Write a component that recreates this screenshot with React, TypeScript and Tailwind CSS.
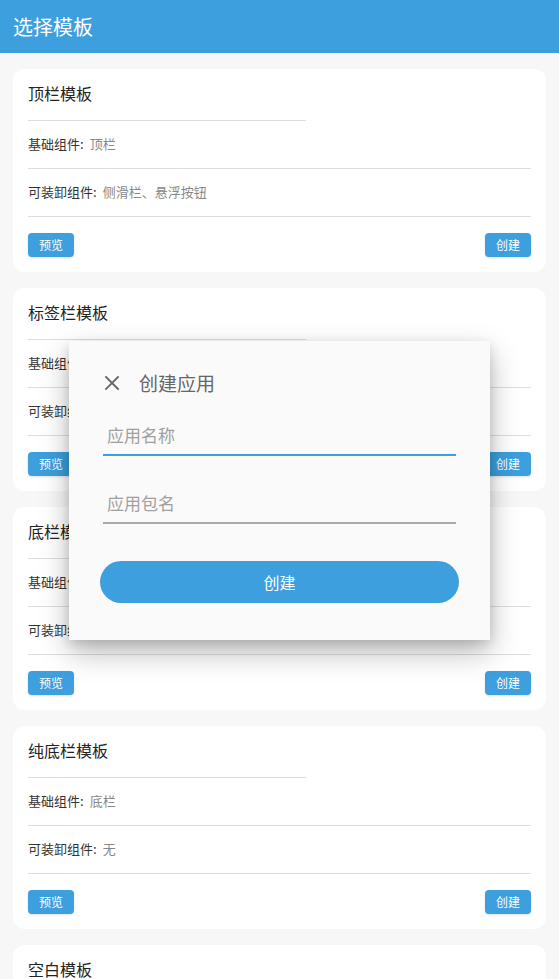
import React from "react";

const FONT = { fontFamily: '"Noto Sans CJK SC", "Noto Sans", sans-serif' };

interface ITemplate {
  title: string;
  base: string;
  optional: string;
}

const templates: ITemplate[] = [
  { title: "顶栏模板", base: "顶栏", optional: "侧滑栏、悬浮按钮" },
  { title: "标签栏模板", base: "顶栏、标签栏", optional: "侧滑栏、悬浮按钮" },
  { title: "底栏模板", base: "顶栏、底栏", optional: "侧滑栏、悬浮按钮" },
  { title: "纯底栏模板", base: "底栏", optional: "无" },
  { title: "空白模板", base: "无", optional: "顶栏、侧滑栏、悬浮按钮" },
];

const TemplateCard = ({ item }: { item: ITemplate }) => (
  <div className="flex h-[203px] shrink-0 flex-col rounded-xl bg-white px-[15px] pt-3 pb-[15px]">
    <div className="h-6 text-base leading-6 text-[#222]">{item.title}</div>
    <div className="mt-[15px] h-px w-[278px] bg-[#dedede]" />
    <div className="flex h-12 items-center border-b border-[#dedede] text-[13px]">
      <span className="-mt-[2px] text-[#333]">基础组件:</span>
      <span className="-mt-[2px] ml-1.5 text-[#888]">{item.base}</span>
    </div>
    <div className="flex h-12 items-center border-b border-[#dedede] text-[13px]">
      <span className="-mt-[2px] text-[#333]">可装卸组件:</span>
      <span className="-mt-[2px] ml-1.5 text-[#888]">{item.optional}</span>
    </div>
    <div className="mt-4 flex items-center justify-between">
      <button className="h-6 w-[46px] rounded-sm bg-[#3d9fdd] text-xs text-white shadow-sm">
        预览
      </button>
      <button className="h-6 w-[46px] rounded-sm bg-[#3d9fdd] text-xs text-white shadow-sm">
        创建
      </button>
    </div>
  </div>
);

const CreateDialog = () => (
  <div className="absolute top-[341px] left-[69px] flex h-[299px] w-[421px] flex-col bg-[#fafafa] px-[34px] shadow-[0_12px_28px_rgba(0,0,0,0.28),0_4px_10px_rgba(0,0,0,0.12)]">
    <div className="mt-[33px] flex h-[18px] items-center">
      <svg
        width="16"
        height="16"
        viewBox="0 0 16 16"
        className="ml-[1px]"
        stroke="#666"
        strokeWidth="1.8"
        strokeLinecap="square"
      >
        <path d="M2 2 L14 14 M14 2 L2 14" />
      </svg>
      <span className="ml-[19px] -mt-[1px] text-[19px] leading-none text-[#666]">
        创建应用
      </span>
    </div>

    {/* inputs */}
    <div className="mt-[32px] flex h-[32px] items-end border-b-2 border-[#3d9fdd] pb-[7px] pl-1 text-[17px] leading-[25px] text-[#a0a0a0]">
      应用名称
    </div>
    <div className="mt-[36px] flex h-[32px] items-end border-b-2 border-[#aaaaaa] pb-[7px] pl-1 text-[17px] leading-[25px] text-[#a0a0a0]">
      应用包名
    </div>

    <button className="mt-[37px] -mx-[3px] h-[42px] rounded-full bg-[#3d9fdd] text-base text-white">
      创建
    </button>
  </div>
);

const App = () => {
  return (
    <div
      className="relative flex h-screen w-full flex-col overflow-hidden bg-[#f7f7f7]"
      style={FONT}
    >
      <header className="flex h-[53px] shrink-0 items-center bg-[#3d9fdd] px-[13px]">
        <h1 className="text-xl text-white">选择模板</h1>
      </header>

      <div className="flex flex-col gap-4 px-[13px] pt-4">
        {templates.map((item) => (
          <TemplateCard key={item.title} item={item} />
        ))}
      </div>

      <CreateDialog />
    </div>
  );
};

export default App;
